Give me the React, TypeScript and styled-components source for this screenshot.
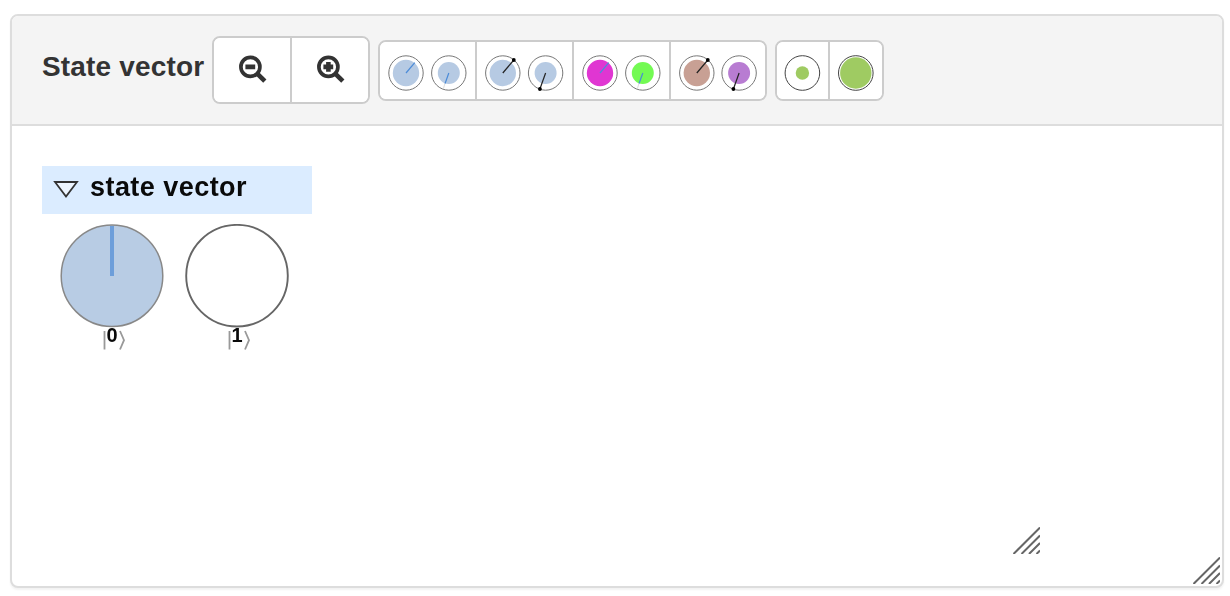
import React from 'react';
import styled, { createGlobalStyle } from 'styled-components';

const GlobalStyle = createGlobalStyle`
  * { box-sizing: border-box; }
  body {
    margin: 0;
    background: #fff;
    font-family: "Liberation Sans", Helvetica, Arial, sans-serif;
    color: #333;
  }
  svg { display: block; flex: none; }
`;

const Page = styled.div`
  padding: 14px 6px 8px 10px;
  height: 596px;
`;

const Panel = styled.section`
  position: relative;
  height: 574px;
  display: flex;
  flex-direction: column;
  border: 2px solid #ddd;
  border-radius: 8px;
  box-shadow: 0 2px 2px rgba(0, 0, 0, 0.05);
  background: #fff;
`;

const Header = styled.header`
  flex: none;
  height: 110px;
  display: flex;
  align-items: flex-start;
  padding: 20px 30px 0;
  background: #f4f4f4;
  border-bottom: 2px solid #ddd;
  border-radius: 6px 6px 0 0;
`;

const Title = styled.h1`
  margin: 14px 0 0;
  width: 170px;
  font-size: 28px;
  line-height: 34px;
  font-weight: 700;
  letter-spacing: 0.18px;
  white-space: nowrap;
`;

const ButtonGroup = styled.div<{ $top?: number; $height: number }>`
  display: flex;
  height: ${p => p.$height}px;
  margin: ${p => p.$top ?? 0}px 8px 0 0;
  border: 2px solid #ccc;
  border-radius: 8px;
  background: #fff;
  overflow: hidden;
`;

const ToolButton = styled.button<{ $width: number }>`
  display: flex;
  width: ${p => p.$width}px;
  height: 100%;
  padding: 0;
  border: 0;
  background: #fff;
  color: #333;
  & + & {
    border-left: 2px solid #ccc;
  }
`;

const Body = styled.main`
  flex: 1;
  padding: 40px 30px 30px;
`;

const Viewer = styled.div`
  position: relative;
  width: 1000px;
  height: 390px;
`;

const Tree = styled.div`
  width: 270px;
  color: #0a0a0a;
  filter: blur(0.5px);
`;

const TreeHeader = styled.div`
  display: flex;
  height: 48px;
  padding-left: 10px;
  background: #dbecff;
`;

const TreeTitle = styled.span`
  margin: 5px 0 0;
  font-size: 27px;
  line-height: 32px;
  font-weight: 700;
  letter-spacing: 0.45px;
  white-space: nowrap;
`;

const States = styled.div`
  display: flex;
  gap: 21px;
  padding: 10px 0 0 18px;
`;

const State = styled.div`
  width: 104px;
`;

const Ket = styled.div`
  display: flex;
  justify-content: center;
  height: 24px;
  padding-left: 5px;
`;

const KetValue = styled.span`
  width: 12px;
  margin-top: -3px;
  font-size: 20px;
  line-height: 20px;
  font-weight: 700;
  text-align: center;
`;

const Grip = styled.svg<{ $right: number; $bottom: number }>`
  position: absolute;
  right: ${p => p.$right}px;
  bottom: ${p => p.$bottom}px;
`;

function Magnifier({ plus }: { plus?: boolean }) {
  return (
    <svg width="76" height="64" viewBox="0 0 76 64">
      <path d="M43 35.4 50.8 43.2" stroke="#333" strokeWidth="4.6" strokeLinecap="butt" />
      <circle cx="36.4" cy="28.9" r="9.5" fill="none" stroke="#333" strokeWidth="3.7" />
      <path d="M31.4 28.9h9.8" stroke="#333" strokeWidth="4.6" />
      {plus && <path d="M36.4 24.1v9.6" stroke="#333" strokeWidth="4.6" />}
    </svg>
  );
}

interface PhasePairProps {
  fills: [string, string];
  hands?: boolean;
  x?: number;
  gap?: number;
}

function PhasePair({ fills, hands, x = 26, gap = 42.8 }: PhasePairProps) {
  return (
    <svg width="95" height="57" viewBox="0 0 95 57">
      <g transform={`translate(${x} 31)`}>
        <circle r="17.2" fill="#fff" stroke="#777" />
        <circle r="13.2" fill={fills[0]} />
        <path d={hands ? 'M0 0 11-13' : 'M0 0 8.8-10.3'} stroke={hands ? '#222' : '#4b8bd8'} strokeWidth="1.2" />
        {hands && <circle cx="11" cy="-13" r="1.9" fill="#000" />}
      </g>
      <g transform={`translate(${x + gap} 31)`}>
        <circle r="17.2" fill="#fff" stroke="#777" />
        <circle r="11" fill={fills[1]} />
        {!hands && <path d="M-3.7 10-5.5 16" stroke="#ddd" />}
        <path d={hands ? 'M0 0-5.7 16' : 'M0 0-3.7 10.5'} stroke={hands ? '#222' : '#4b8bd8'} strokeWidth="1.2" />
        {hands && <circle cx="-5.7" cy="16" r="1.9" fill="#000" />}
      </g>
    </svg>
  );
}

function Magnitude({ radius, cx }: { radius: number; cx: number }) {
  return (
    <svg width="52" height="57" viewBox="0 0 52 57">
      <circle cx={cx} cy="31" r="17.3" fill="#fff" stroke="#444" />
      <circle cx={cx} cy="31" r={radius} fill="#9fcb62" />
    </svg>
  );
}

function BasisState({ value, filled }: { value: string; filled?: boolean }) {
  return (
    <State>
      <svg width="104" height="104" viewBox="0 0 104 104">
        <circle cx="52" cy="51.7" r="50.8" fill={filled ? '#b8cce4' : '#fff'} stroke={filled ? '#888' : '#666'} strokeWidth={filled ? 1.5 : 1.9} />
        {filled && <path d="M52 2v50" stroke="#6d9eda" strokeWidth="4" />}
      </svg>
      <Ket>
        <svg width="3" height="24" viewBox="0 0 3 24">
          <path d="M1.5 3v18.5" stroke="#999" strokeWidth="1.8" />
        </svg>
        <KetValue>{value}</KetValue>
        <svg width="8" height="24" viewBox="0 0 8 24">
          <path d="M2 3 6 12.2 2 21.5" fill="none" stroke="#999" strokeWidth="1.8" />
        </svg>
      </Ket>
    </State>
  );
}

function ResizeGrip({ right, bottom }: { right: number; bottom: number }) {
  return (
    <Grip $right={right} $bottom={bottom} width="27" height="27" viewBox="0 0 27 27">
      <path d="M0.5 27 27 0.5M8.5 27 27 8.5M16 27 27 16M23.5 27 27 23.5" stroke="#666" strokeWidth="2" />
    </Grip>
  );
}

export default function App() {
  return (
    <Page>
      <GlobalStyle />
      <Panel>
        <Header>
          <Title>State vector</Title>
          <ButtonGroup $height={68}>
            <ToolButton $width={76} aria-label="Zoom out"><Magnifier /></ToolButton>
            <ToolButton $width={78} aria-label="Zoom in"><Magnifier plus /></ToolButton>
          </ButtonGroup>
          <ButtonGroup $height={61} $top={4}>
            <ToolButton $width={95}><PhasePair fills={['#b6cae3', '#b6cae3']} /></ToolButton>
            <ToolButton $width={97}><PhasePair fills={['#b6cae3', '#b6cae3']} hands x={25.8} /></ToolButton>
            <ToolButton $width={97}><PhasePair fills={['#e036d2', '#73fa53']} x={26} /></ToolButton>
            <ToolButton $width={96}><PhasePair fills={['#c8a094', '#b87cd2']} hands x={25.8} gap={42.3} /></ToolButton>
          </ButtonGroup>
          <ButtonGroup $height={61} $top={4}>
            <ToolButton $width={51}><Magnitude radius={6.7} cx={25.4} /></ToolButton>
            <ToolButton $width={54}><Magnitude radius={15.7} cx={25.8} /></ToolButton>
          </ButtonGroup>
        </Header>
        <Body>
          <Viewer>
            <Tree>
              <TreeHeader>
                <svg width="38" height="48" viewBox="0 0 38 48">
                  <path d="M3 16h22L14 30.5Z" fill="#edf5ff" stroke="#333" strokeWidth="1.8" />
                </svg>
                <TreeTitle>state vector</TreeTitle>
              </TreeHeader>
              <States>
                <BasisState value="0" filled />
                <BasisState value="1" />
              </States>
            </Tree>
            <ResizeGrip right={2} bottom={2} />
          </Viewer>
        </Body>
        <ResizeGrip right={2} bottom={2} />
      </Panel>
    </Page>
  );
}
